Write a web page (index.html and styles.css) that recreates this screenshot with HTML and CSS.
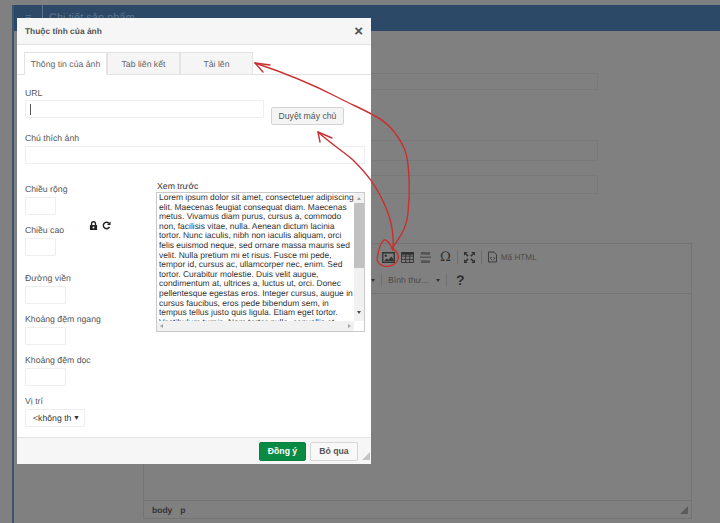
FILE: index.html
```html
<!DOCTYPE html>
<html lang="en">
<head>
  <meta charset="UTF-8" />
  <title>Thuộc tính của ảnh</title>
  <link rel="stylesheet" href="styles.css">
</head>
<body>

  <div class="page">
    <header class="topbar">
      <span class="topbar-icon">≡</span>
      <span class="topbar-title">Chi tiết sản phẩm</span>
    </header>

    <div class="content">
      <div class="ghost-input first"></div>
      <div class="ghost-input second"></div>
      <div class="ghost-input third"></div>

      <div class="editor">
        <div class="editor-toolbar">
          <div class="tool-row">
            <svg class="tool" viewBox="0 0 14 12" width="13" height="11"><path fill="#333" d="M0 0h14v12H0zM1.500 1.500v9h11v-9z"/><circle cx="4" cy="4" r="1.300" fill="#333"/><path fill="#333" d="M2 10l3-3 2 1.500L10 5l2.500 3v2z"/></svg>
            <svg class="tool" viewBox="0 0 14 12" width="13" height="11"><path fill="#333" d="M0 0h14v3H0z"/><path fill="none" stroke="#333" d="M.5.500h13v11H.5zM.5 4.500h13M.5 8h13M5 .500v11M9.500 .500v11"/></svg>
            <svg class="tool" viewBox="0 0 12 12" width="11" height="11"><path fill="#555" d="M1 0h10v3H1zM0 5h12v1.500H0zM1 9h10v3H1z"/></svg>
            <span class="tool omega">Ω</span>
            <span class="tool-sep"></span>
            <svg class="tool" viewBox="0 0 12 12" width="11" height="11"><path fill="none" stroke="#333" stroke-width="1.600" d="M1 1l3.500 3.500M11 1L7.500 4.500M1 11l3.500-3.500M11 11L7.500 7.500"/><path fill="#333" d="M0 0h4L0 4zM12 0v4L8 0zM0 12V8l4 4zM12 12H8l4-4z"/></svg>
            <span class="tool-sep"></span>
            <svg class="tool" viewBox="0 0 10 12" width="9" height="12"><path fill="none" stroke="#333" d="M.5.500h6l3 3v8h-9z"/><path fill="none" stroke="#333" d="M4 6L2.500 7.500 4 9M6 6l1.500 1.500L6 9"/></svg>
            <span class="tool-label html-label">Mã HTML</span>
          </div>
          <div class="tool-row lower">
            <span class="caret"></span>
            <span class="tool-sep"></span>
            <span class="tool-label format">Bình thư...</span>
            <span class="caret"></span>
            <span class="tool-sep"></span>
            <span class="help">?</span>
          </div>
        </div>
        <div class="editor-area"></div>
        <div class="editor-status">
          <span>body</span><span>p</span>
          <svg class="grip" viewBox="0 0 8 8" width="8" height="8"><path fill="#5c5c5c" d="M8 0v8H0z"/></svg>
        </div>
      </div>
    </div>
  </div>

  <div class="dialog">
    <div class="dialog-head">
      <span class="dialog-title">Thuộc tính của ảnh</span>
      <span class="dialog-close">×</span>
    </div>

    <div class="tabs">
      <span class="tab active">Thông tin của ảnh</span>
      <span class="tab">Tab liên kết</span>
      <span class="tab">Tải lên</span>
    </div>

    <div class="dialog-body">
      <label class="lbl url-lbl">URL</label>
      <div class="url-row">
        <div class="input url-input"><span class="cursor"></span></div>
        <button class="btn browse">Duyệt máy chủ</button>
      </div>

      <label class="lbl caption-lbl">Chú thích ảnh</label>
      <div class="input"></div>

      <div class="columns">
        <div class="left-col">
          <div class="size-group">
            <div>
              <label class="lbl">Chiều rộng</label>
              <div class="input small"></div>
              <label class="lbl gap">Chiều cao</label>
              <div class="input small"></div>
            </div>
            <div class="lock-icons">
              <svg viewBox="0 0 10 10" width="9" height="9"><path fill="#222" d="M1 4.500h8V10H1z"/><path fill="none" stroke="#222" stroke-width="1.500" d="M2.800 4.500V3a2.200 2.200 0 0 1 4.400 0v1.500"/><circle cx="5" cy="7.200" r="1" fill="#fff"/></svg>
              <svg viewBox="0 0 10 10" width="9" height="9"><path fill="none" stroke="#222" stroke-width="1.600" d="M8.300 6.500A3.600 3.600 0 1 1 7.600 2.400"/><path fill="#222" d="M9.500 .500v4h-4z"/></svg>
            </div>
          </div>
          <label class="lbl wide-gap">Đường viền</label>
          <div class="input medium"></div>
          <label class="lbl gap">Khoảng đệm ngang</label>
          <div class="input medium"></div>
          <label class="lbl gap">Khoảng đệm dọc</label>
          <div class="input medium"></div>
          <label class="lbl gap">Vị trí</label>
          <div class="input select">
            <span>&lt;không th</span>
            <span class="select-arrow">▼</span>
          </div>
        </div>

        <div class="right-col">
          <div class="preview-lbl">Xem trước</div>
          <div class="preview">
            <div class="preview-main">
              <div class="preview-text">
                <p>Lorem ipsum dolor sit amet, consectetuer adipiscing</p>
                <p>elit. Maecenas feugiat consequat diam. Maecenas</p>
                <p>metus. Vivamus diam purus, cursus a, commodo</p>
                <p>non, facilisis vitae, nulla. Aenean dictum lacinia</p>
                <p>tortor. Nunc iaculis, nibh non iaculis aliquam, orci</p>
                <p>felis euismod neque, sed ornare massa mauris sed</p>
                <p>velit. Nulla pretium mi et risus. Fusce mi pede,</p>
                <p>tempor id, cursus ac, ullamcorper nec, enim. Sed</p>
                <p>tortor. Curabitur molestie. Duis velit augue,</p>
                <p>condimentum at, ultrices a, luctus ut, orci. Donec</p>
                <p>pellentesque egestas eros. Integer cursus, augue in</p>
                <p>cursus faucibus, eros pede bibendum sem, in</p>
                <p>tempus tellus justo quis ligula. Etiam eget tortor.</p>
                <p>Vestibulum turpis. Nam tortor nulla, convallis et</p>
              </div>
              <div class="hscroll">
                <span class="arrow-left"></span>
                <span class="arrow-right"></span>
              </div>
            </div>
            <div class="vscroll">
              <span class="arrow-up"></span>
              <span class="thumb"></span>
              <span class="arrow-down"></span>
              <span class="corner"></span>
            </div>
          </div>
        </div>
      </div>
    </div>

    <div class="dialog-foot">
      <button class="btn ok">Đồng ý</button>
      <button class="btn cancel">Bỏ qua</button>
      <svg class="dialog-grip" viewBox="0 0 8 8" width="8" height="8"><path fill="#c4c4c4" d="M8 0v8H0z"/></svg>
    </div>
  </div>

  <!-- red marks drawn over the screenshot -->
  <svg class="marks" viewBox="0 0 720 523" width="720" height="523">
    <g fill="none" stroke="#c9302f" stroke-width="1.400" stroke-linecap="round" stroke-linejoin="round">
      <path d="M255 63C285 73 312 84 337 97C350 104 365 110 373 115C384 120 396 130 405 150C410 165 410 195 408 213C407 224 404 232 397 241L392 249"/>
      <path d="M255 63L270 65M255 63L263 72"/>
      <path d="M318 132C330 143 344 152 353 160C365 172 378 186 388 213C392 224 394 236 393 250"/>
      <path d="M318 132L332 138M318 132L320 142"/>
      <path d="M393 250C390 243 386 239 384 240C380 243 378 252 377 260C379 266 386 268 393 265C398 262 400 257 397 253C396 251 394 250 393 248"/>
    </g>
  </svg>

</body>
</html>
```

FILE: styles.css
```css
* {
  box-sizing: border-box;
}

body {
  margin: 0;
  height: 523px;
  overflow: hidden;
  background: #808080;
  font-family: "Liberation Sans", Arial, sans-serif;
  font-size: 8.700px;
  color: #444;
  text-rendering: geometricPrecision;
}

p {
  margin: 0;
}

/* dimmed page behind the dialog */
.page {
  margin: 5px 0 0 12px;
  height: 518px;
  border-left: 2px solid #3d566f;
}

.topbar {
  height: 26px;
  background: #2c4a68;
  display: flex;
  align-items: center;
  color: #5d7690;
  font-size: 11px;
}

.topbar-icon {
  width: 29px;
  padding-left: 11px;
  border-right: 1px solid #5d7690;
  line-height: 26px;
}

.topbar-title {
  margin-left: 6px;
}

.content {
  padding: 42px 0 0 129px;
}

.ghost-input {
  width: 455px;
  border: 1px solid #797979;
}

.ghost-input.first {
  height: 17px;
}

.ghost-input.second {
  height: 21px;
  margin-top: 50px;
}

.ghost-input.third {
  height: 19px;
  margin-top: 14px;
}

.editor {
  width: 549px;
  height: 276px;
  margin-top: 49px;
  border: 1px solid #747474;
  display: flex;
  flex-direction: column;
}

.editor-toolbar {
  height: 50px;
  border-bottom: 1px solid #747474;
  padding: 4px 0 0 238px;
}

.tool-row {
  display: flex;
  align-items: center;
  gap: 6px;
  height: 18px;
}

.tool-row.lower {
  margin: 5px 0 0 -11px;
}

.tool {
  flex: none;
}

.omega {
  font-size: 13px;
  color: #2f2f2f;
  font-family: "DejaVu Serif", serif;
  margin-left: 3px;
}

.tool-sep {
  width: 1px;
  height: 14px;
  background: #707070;
}

.tool-label {
  color: #4c4c4c;
  white-space: nowrap;
}

.html-label {
  margin-left: -2px;
  font-size: 8.200px;
}

.format {
  width: 42px;
}

.caret {
  border-top: 3px solid #333;
  border-left: 2.500px solid transparent;
  border-right: 2.500px solid transparent;
}

.help {
  font-weight: bold;
  font-size: 14px;
  color: #2f2f2f;
  margin-left: 3px;
}

.editor-area {
  flex: 1;
}

.editor-status {
  height: 18px;
  border-top: 1px solid #747474;
  display: flex;
  align-items: center;
  gap: 8px;
  padding: 0 3px 0 8px;
  font-weight: bold;
  font-size: 8.500px;
  color: #333;
}

.grip {
  margin-left: auto;
}

/* dialog */
.dialog {
  position: absolute;
  left: 17px;
  top: 18px;
  width: 354px;
  height: 446px;
  background: #fff;
  display: flex;
  flex-direction: column;
}

.dialog-head {
  height: 27px;
  flex: none;
  background: #f6f6f6;
  border-bottom: 1px solid #e2e2e2;
  display: flex;
  align-items: center;
  justify-content: space-between;
  padding: 0 8px;
}

.dialog-title {
  font-weight: bold;
  font-size: 8.400px;
  color: #555;
}

.dialog-close {
  font-size: 15px;
  font-weight: bold;
  color: #555;
  line-height: 1;
}

.tabs {
  height: 30px;
  flex: none;
  display: flex;
  align-items: flex-end;
  padding-left: 7px;
  border-bottom: 1px solid #e2e2e2;
}

.tab {
  width: 73px;
  height: 23px;
  margin-bottom: -1px;
  background: #f5f5f5;
  border: 1px solid #e2e2e2;
  display: flex;
  align-items: center;
  justify-content: center;
  color: #666;
}

.tab.active {
  width: 83px;
  background: #fff;
  border-bottom-color: #fff;
}

.dialog-body {
  flex: 1;
  padding: 12px 6px 0 8px;
}

.lbl {
  display: block;
  height: 12px;
  line-height: 10px;
  margin-bottom: 1px;
  color: #555;
}

.lbl.url-lbl {
  line-height: 12px;
}

.lbl.gap {
  margin-top: 10px;
}

.lbl.wide-gap {
  margin-top: 17px;
}

.lbl.caption-lbl {
  margin-top: 8px;
}

.input {
  height: 18px;
  border: 1px solid #eee;
  border-radius: 1px;
  background: #fff;
}

.input.small {
  width: 31px;
}

.input.medium {
  width: 41px;
}

.input.select {
  width: 60px;
  display: flex;
  align-items: center;
  justify-content: space-between;
  padding: 0 4px 0 7px;
  color: #333;
  white-space: nowrap;
}

.select-arrow {
  font-size: 7px;
}

.url-row {
  display: flex;
  gap: 7px;
}

.url-input {
  width: 239px;
  padding: 3px 0 0 4px;
}

.cursor {
  display: block;
  width: 1px;
  height: 11px;
  background: #555;
}

.btn {
  height: 19px;
  padding: 0;
  font: inherit;
  border-radius: 2px;
  cursor: pointer;
}

.browse {
  width: 73px;
  height: 18px;
  margin-top: 7px;
  background: #f4f4f4;
  border: 1px solid #d4d4d4;
  color: #555;
}

.columns {
  display: grid;
  grid-template-columns: 131px 209px;
  margin-top: 17px;
}

.left-col {
  padding-top: 3px;
}

.size-group {
  display: flex;
  align-items: center;
}

.lock-icons {
  display: flex;
  gap: 4px;
  margin: 10px 0 0 21px;
}

.preview-lbl {
  height: 11px;
  line-height: 11px;
  padding-left: 1px;
  color: #333;
}

.preview {
  height: 140px;
  border: 1px solid #c9c9c9;
  display: flex;
  color: #333;
}

.preview-main {
  width: 197px;
  display: flex;
  flex-direction: column;
}

.preview-text {
  flex: 1;
  overflow: hidden;
  padding-left: 2px;
  font-size: 8.450px;
  line-height: 9.600px;
  white-space: nowrap;
}

.hscroll {
  height: 10px;
  flex: none;
  background: #f1f1f1;
  display: flex;
  align-items: center;
  justify-content: space-between;
  padding: 0 3px;
}

.vscroll {
  width: 10px;
  background: #f1f1f1;
  display: flex;
  flex-direction: column;
  align-items: center;
}

.arrow-up {
  margin: 4px 0 3px;
  border-bottom: 3px solid #a3a3a3;
  border-left: 2.500px solid transparent;
  border-right: 2.500px solid transparent;
}

.thumb {
  width: 100%;
  height: 65px;
  background: #c1c1c1;
}

.arrow-down {
  margin-top: 43px;
  border-top: 3px solid #505050;
  border-left: 2.500px solid transparent;
  border-right: 2.500px solid transparent;
}

.corner {
  width: 100%;
  height: 10px;
  margin-top: auto;
  background: #fff;
}

.arrow-left {
  border-right: 3px solid #a3a3a3;
  border-top: 2.500px solid transparent;
  border-bottom: 2.500px solid transparent;
}

.arrow-right {
  border-left: 3px solid #a3a3a3;
  border-top: 2.500px solid transparent;
  border-bottom: 2.500px solid transparent;
}

.dialog-foot {
  height: 27px;
  flex: none;
  background: #f6f6f6;
  border-top: 1px solid #e2e2e2;
  display: flex;
  align-items: center;
  justify-content: flex-end;
  gap: 4px;
  padding-right: 1px;
}

.ok {
  width: 47px;
  background: #0b8a43;
  border: 1px solid #0a8040;
  color: #fff;
  font-weight: bold;
}

.cancel {
  width: 48px;
  background: #f8f8f8;
  border: 1px solid #d6d6d6;
  color: #555;
  font-weight: bold;
}

.dialog-grip {
  margin-top: 10px;
}

.marks {
  position: absolute;
  left: 0;
  top: 0;
  pointer-events: none;
}
```
